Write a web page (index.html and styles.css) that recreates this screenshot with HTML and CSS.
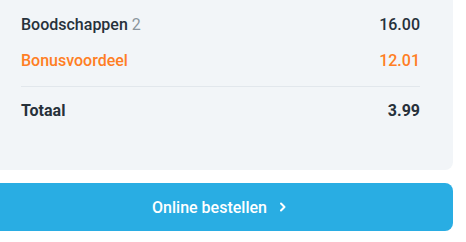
FILE: index.html
```html
<!DOCTYPE html>
<html lang="nl">
<head>
<meta charset="utf-8">
<link rel="stylesheet" href="styles.css">
</head>
<body>
<div class="wrap">
  <section class="card">
    <div class="row">
      <span class="label">Boodschappen <span class="count">2</span></span>
      <span class="amount">16.00</span>
    </div>
    <div class="row bonus">
      <span class="label">Bonusvoordeel</span>
      <span class="amount">12.01</span>
    </div>
    <hr class="divider">
    <div class="row total">
      <span class="label">Totaal</span>
      <span class="amount">3.99</span>
    </div>
  </section>
  <button class="order" type="button">
    <span>Online bestellen</span>
    <svg class="chev" width="8" height="12" viewBox="0 0 8 12"><path d="M2 2.5 L5.5 6 L2 9.5" fill="none" stroke="#fff" stroke-width="2" stroke-linecap="round" stroke-linejoin="round"/></svg>
  </button>
</div>
</body>
</html>
```
FILE: styles.css
```css
html, body {
  margin: 0;
  padding: 0;
  background: #ffffff;
}
.wrap {
  width: 453px;
  display: flex;
  flex-direction: column;
  gap: 13px;
}
.card {
  box-sizing: border-box;
  height: 170px;
  background: #f2f5f8;
  border-radius: 0 0 8px 0;
  padding: 15px 33px 0 21px;
  display: flex;
  flex-direction: column;
  gap: 16px;
  font-family: Roboto, sans-serif;
  font-weight: 500;
  font-size: 16px;
  color: #27313b;
}
.row {
  display: flex;
  justify-content: space-between;
  align-items: baseline;
  line-height: 20px;
  height: 20px;
}
.count {
  color: #8b959d;
  font-weight: 400;
}
.bonus {
  color: #ff7e24;
}
.divider {
  margin: -1px 0 -2px 0;
  border: 0;
  height: 1px;
  background: #e2e7ec;
}
.total {
  font-weight: 700;
}
.order {
  height: 48px;
  border: 0;
  border-radius: 0 8px 8px 0;
  background: #29ade3;
  color: #ffffff;
  font-family: Roboto, sans-serif;
  font-weight: 500;
  font-size: 16px;
  display: flex;
  align-items: center;
  justify-content: center;
  gap: 12px;
  padding: 0 14px 0 0;
}
.chev {
  display: block;
}
```
